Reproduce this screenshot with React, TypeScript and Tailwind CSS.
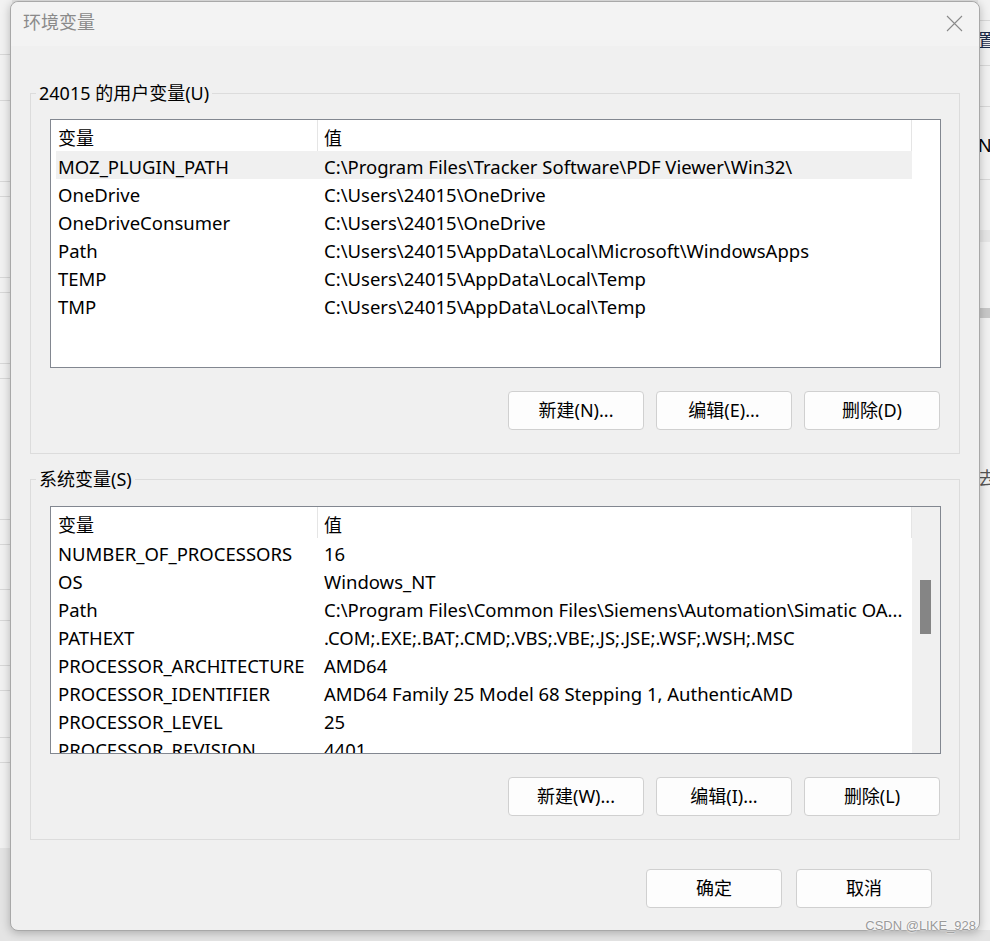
type Row = [string, string]

const userVars: Row[] = [
  ['MOZ_PLUGIN_PATH', 'C:\\Program Files\\Tracker Software\\PDF Viewer\\Win32\\'],
  ['OneDrive', 'C:\\Users\\24015\\OneDrive'],
  ['OneDriveConsumer', 'C:\\Users\\24015\\OneDrive'],
  ['Path', 'C:\\Users\\24015\\AppData\\Local\\Microsoft\\WindowsApps'],
  ['TEMP', 'C:\\Users\\24015\\AppData\\Local\\Temp'],
  ['TMP', 'C:\\Users\\24015\\AppData\\Local\\Temp'],
]

const systemVars: Row[] = [
  ['NUMBER_OF_PROCESSORS', '16'],
  ['OS', 'Windows_NT'],
  ['Path', 'C:\\Program Files\\Common Files\\Siemens\\Automation\\Simatic OA...'],
  ['PATHEXT', '.COM;.EXE;.BAT;.CMD;.VBS;.VBE;.JS;.JSE;.WSF;.WSH;.MSC'],
  ['PROCESSOR_ARCHITECTURE', 'AMD64'],
  ['PROCESSOR_IDENTIFIER', 'AMD64 Family 25 Model 68 Stepping 1, AuthenticAMD'],
  ['PROCESSOR_LEVEL', '25'],
  ['PROCESSOR_REVISION', '4401'],
]

function Button({ label, className }: { label: string; className?: string }) {
  return (
    <button
      className={
        'flex h-[39px] w-[136px] items-center justify-center rounded-[4px] border border-[#d0d0d0] bg-[#fdfdfd] text-[18px] text-black ' +
        (className ?? '')
      }
    >
      {label}
    </button>
  )
}

function VarList({
  rows,
  selected,
  scrollbar,
  height,
}: {
  rows: Row[]
  selected?: number
  scrollbar?: boolean
  height: string
}) {
  return (
    <div className={'flex overflow-hidden border border-[#828790] bg-white ' + height}>
      <div className="w-[861px] shrink-0">
        {/* column header */}
        <div className="flex h-[31px] border-r border-[#e5e5e5] text-[18px] text-black">
          <div className="flex h-full w-[267px] items-center border-r border-[#e5e5e5] pl-[7px] pt-[6px]">变量</div>
          <div className="flex h-full items-center pl-[6px] pt-[6px]">值</div>
        </div>
        {rows.map(([name, value], i) => (
          <div
            key={name + i}
            className={
              'ml-[5px] grid h-[28px] grid-cols-[261px_1fr] items-center whitespace-nowrap pt-[3px] text-[18.5px] leading-[25px] text-black ' +
              (i === selected ? 'bg-[#f0f0f0]' : '')
            }
          >
            <div className="overflow-hidden pl-[2px]">{name}</div>
            <div className="overflow-hidden pl-[7px]">{value}</div>
          </div>
        ))}
      </div>
      {scrollbar ? (
        <div className="w-[28px] shrink-0 bg-[#f0f0f0] pl-[8px] pt-[73px]">
          <div className="h-[54px] w-[11px] bg-[#858585]" />
        </div>
      ) : (
        <div className="w-[28px] shrink-0" />
      )}
    </div>
  )
}

function GroupBox({
  title,
  children,
  className,
}: {
  title: string
  children: React.ReactNode
  className?: string
}) {
  return (
    <fieldset className={'w-[930px] border border-[#dcdcdc] pb-[23px] pl-[19px] pr-[18px] ' + (className ?? '')}>
      <legend className="ml-[-14px] px-[3px] text-[18px] leading-[24px] text-black">{title}</legend>
      {children}
    </fieldset>
  )
}

export default function App() {
  return (
    <div className="relative h-[941px] w-[990px] overflow-hidden bg-[#e4e4e4] font-['Noto_Sans','Noto_Sans_CJK_SC',sans-serif]">
      {/* window behind, left strip */}
      <div className="absolute left-0 top-0 flex h-[848px] w-[12px] flex-col bg-[#f2f2f2]">
        <div className="mt-[54px] h-px bg-[#d8d8d8]" />
        <div className="mt-[45px] h-px bg-[#d8d8d8]" />
        <div className="mt-[80px] h-px bg-[#d8d8d8]" />
        <div className="mt-[14px] h-px bg-[#d8d8d8]" />
        <div className="mt-[80px] h-px bg-[#d8d8d8]" />
        <div className="mt-[14px] h-px bg-[#d8d8d8]" />
        <div className="mt-[70px] h-px bg-[#d8d8d8]" />
        <div className="mt-[14px] h-px bg-[#d8d8d8]" />
        <div className="mt-[140px] h-px bg-[#d8d8d8]" />
        <div className="mt-[24px] h-px bg-[#d8d8d8]" />
        <div className="mt-[44px] h-px bg-[#d8d8d8]" />
        <div className="mt-[30px] h-px bg-[#d8d8d8]" />
        <div className="mt-[44px] h-px bg-[#d8d8d8]" />
        <div className="mt-[24px] h-px bg-[#d8d8d8]" />
        <div className="mt-[46px] h-px bg-[#d8d8d8]" />
        <div className="mt-[24px] h-px bg-[#d8d8d8]" />
      </div>
      {/* window behind, right strip */}
      <div className="absolute right-0 top-0 flex h-[930px] w-[12px] flex-col overflow-hidden bg-[#f2f2f2] text-[18px] text-black">
        <div className="mt-[20px] h-px bg-[#d8d8d8]" />
        <div className="mt-[6px] whitespace-nowrap leading-[26px] text-[#1a2a4a]">置(</div>
        <div className="mt-[12px] h-px bg-[#d8d8d8]" />
        <div className="mt-[40px] h-px bg-[#d8d8d8]" />
        <div className="mt-[25px] whitespace-nowrap leading-[26px]">N</div>
        <div className="mt-[21px] h-px bg-[#d8d8d8]" />
        <div className="mt-[50px] h-[12px] bg-[#e6e6e6]" />
        <div className="mt-[66px] h-[10px] bg-[#c8c8c8]" />
        <div className="mt-[147px] whitespace-nowrap leading-[26px] text-[#555]">去</div>
      </div>

      {/* dialog */}
      <div className="relative ml-[10px] mt-[1px] flex h-[930px] w-[970px] flex-col rounded-[8px] border border-[#a8a8a8] bg-[#f0f0f0] shadow-[0_2px_10px_rgba(0,0,0,0.25)]">
        <div className="flex h-[44px] items-center justify-between rounded-t-[8px] bg-[#f3f3f3] pb-[3px] pl-[12px] pr-[16px]">
          <span className="text-[18px] text-[#8a8a8a]">环境变量</span>
          <svg width="17" height="17" viewBox="0 0 17 17" className="mt-[2px]">
            <path d="M1 1 L16 16 M16 1 L1 16" stroke="#8a8a8a" strokeWidth="1.1" fill="none" />
          </svg>
        </div>

        <div className="flex flex-col pl-[19px]">
          <GroupBox title="24015 的用户变量(U)" className="mt-[35px]">
            <div className="mt-[14px]">
              <VarList rows={userVars} selected={0} height="h-[249px]" />
            </div>
            <div className="mt-[23px] flex justify-end gap-[12px] pr-px">
              <Button label="新建(N)..." />
              <Button label="编辑(E)..." />
              <Button label="删除(D)" />
            </div>
          </GroupBox>

          <GroupBox title="系统变量(S)" className="mt-[13px]">
            <div className="mt-[15px]">
              <VarList rows={systemVars} scrollbar height="h-[248px]" />
            </div>
            <div className="mt-[23px] flex justify-end gap-[12px] pr-px">
              <Button label="新建(W)..." />
              <Button label="编辑(I)..." />
              <Button label="删除(L)" />
            </div>
          </GroupBox>

          <div className="mt-[29px] flex justify-end gap-[14px] pr-[47px]">
            <Button label="确定" className="w-[135px]" />
            <Button label="取消" className="w-[135px]" />
          </div>
        </div>
      </div>

      {/* watermark */}
      <div className="absolute bottom-[6px] right-[14px] font-['Liberation_Sans',sans-serif] text-[13px] text-[#9a9a9a] [text-shadow:0_0_2px_#fff,0_0_2px_#fff]">
        CSDN @LIKE_928
      </div>
    </div>
  )
}
